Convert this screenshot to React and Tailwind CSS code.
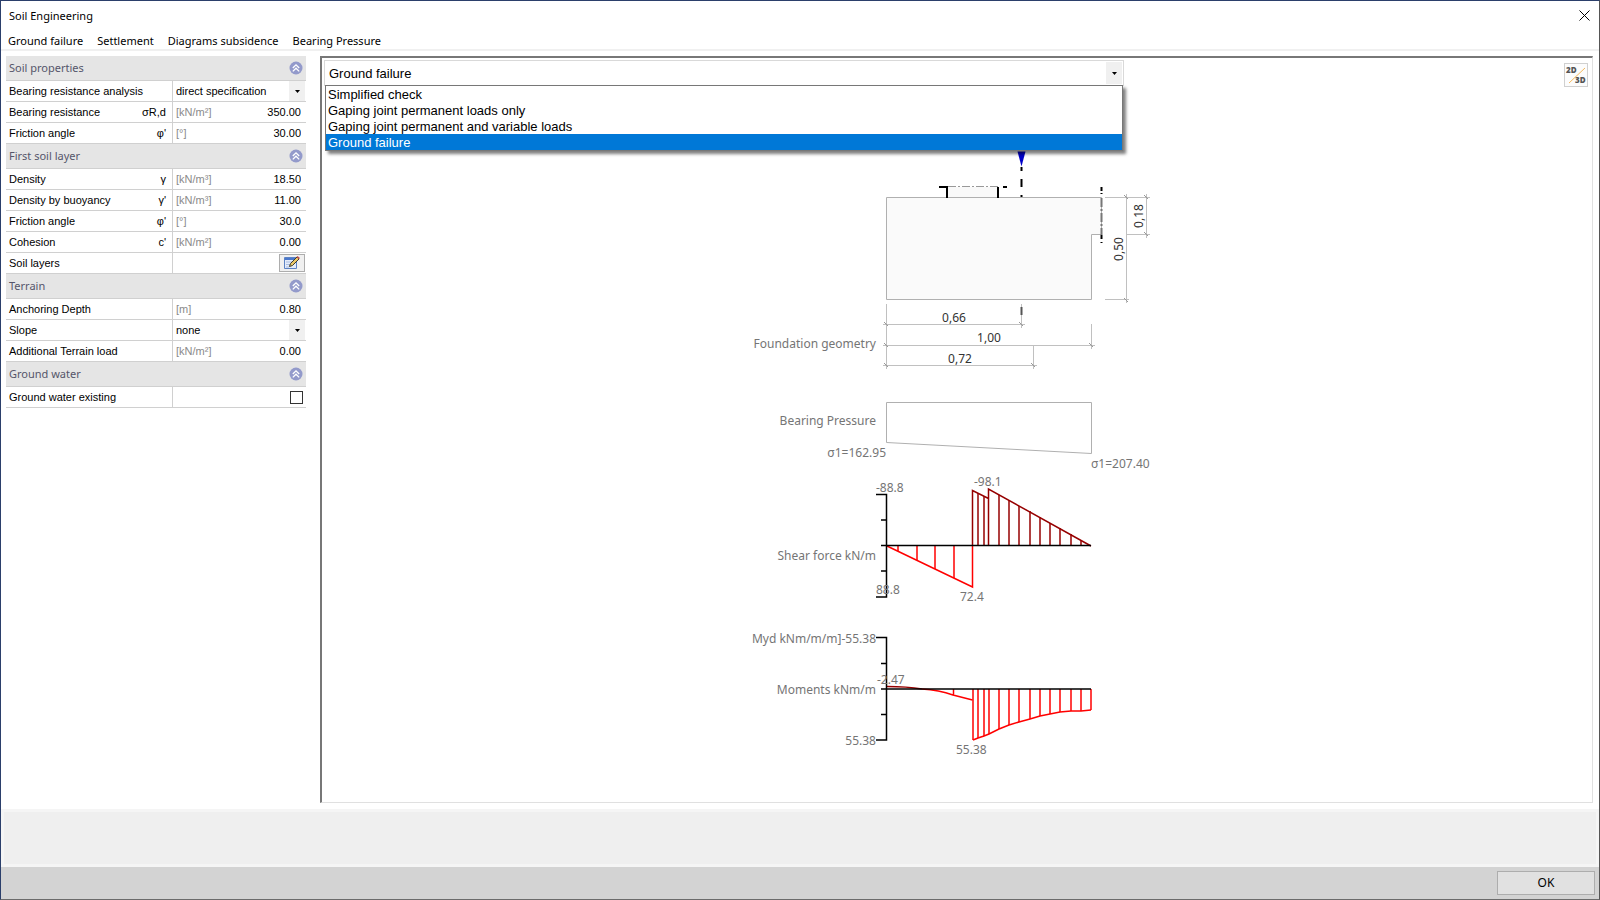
import { useState } from 'react'

const menuItems = ['Ground failure', 'Settlement', 'Diagrams subsidence', 'Bearing Pressure']

const checks = [
  'Simplified check',
  'Gaping joint permanent loads only',
  'Gaping joint permanent and variable loads',
  'Ground failure',
]

const sections = [
  {
    title: 'Soil properties',
    rows: [
      { id: 'analysis', label: 'Bearing resistance analysis', options: ['direct specification', 'calculated'] },
      { id: 'resistance', label: 'Bearing resistance', symbol: 'σR,d', unit: '[kN/m²]', value: '350.00' },
      { id: 'friction', label: 'Friction angle', symbol: "φ'", unit: '[°]', value: '30.00' },
    ],
  },
  {
    title: 'First soil layer',
    rows: [
      { id: 'density', label: 'Density', symbol: 'γ', unit: '[kN/m³]', value: '18.50' },
      { id: 'buoyancy', label: 'Density by buoyancy', symbol: "γ'", unit: '[kN/m³]', value: '11.00' },
      { id: 'layerFriction', label: 'Friction angle', symbol: "φ'", unit: '[°]', value: '30.0' },
      { id: 'cohesion', label: 'Cohesion', symbol: "c'", unit: '[kN/m²]', value: '0.00' },
      { id: 'layers', label: 'Soil layers', action: true },
    ],
  },
  {
    title: 'Terrain',
    rows: [
      { id: 'depth', label: 'Anchoring Depth', unit: '[m]', value: '0.80' },
      { id: 'slope', label: 'Slope', options: ['none', 'continuous'] },
      { id: 'terrainLoad', label: 'Additional Terrain load', unit: '[kN/m²]', value: '0.00' },
    ],
  },
  {
    title: 'Ground water',
    rows: [{ id: 'water', label: 'Ground water existing', checkbox: true }],
  },
]

// [x, y] of every ordinate in the result diagrams
const shearLeft = [[898, 551], [917, 560], [935, 569], [954, 578]]
const shearRight = [
  [978, 493], [984, 496], [999, 495], [1009, 500], [1019, 506], [1030, 511],
  [1040, 517], [1050, 523], [1060, 528], [1071, 534], [1081, 540],
]
const moments = [
  [973, 740], [978, 738], [984, 736], [989, 734], [999, 729], [1009, 725], [1019, 722],
  [1030, 719], [1040, 716], [1050, 714], [1060, 712], [1071, 711], [1081, 711], [1091, 710],
]

function ArrowDown() {
  return (
    <span className="pointer-events-none col-start-1 row-start-1 flex h-full w-4 items-center justify-center justify-self-end bg-[#f0f0f0]">
      <svg width="5" height="3" viewBox="0 0 5 3"><path d="M0 0h5L2.5 3z" /></svg>
    </span>
  )
}

function CollapseIcon() {
  return (
    <svg width="14" height="14" viewBox="0 0 14 14" fill="none">
      <circle cx="7" cy="7" r="6.5" fill="#939acb" />
      <path d="M3.8 7 7 3.8 10.2 7M3.8 10.4 7 7.2l3.2 3.2" stroke="#fff" strokeWidth="1.3" />
    </svg>
  )
}

function EditIcon() {
  return (
    <svg width="16" height="14" viewBox="0 0 16 14">
      <path d="M.5 1.500h12v11H.5z" fill="#e4ecfa" stroke="#5d83c4" />
      <path d="M1 2h11v2H1z" fill="#4a78cc" />
      <path d="M2 6h6M2 8.500h5M2 11h3" stroke="#a9bde2" />
      <path d="m5.500 10.500 1-3L13 1l2 2-6.500 6.500z" fill="#e9c766" stroke="#3c3a2c" />
      <path d="m12.500 1 1-1L16 2l-1.200 1.200z" fill="#c0504d" />
    </svg>
  )
}

function Row({ row }) {
  return (
    <div className="grid h-[21px] grid-cols-[167px_minmax(0,1fr)] border-b border-[#d0d0d0]">
      <label htmlFor={row.id} className="flex items-center justify-between border-r border-[#d0d0d0] pr-1.5 pl-[3px]">
        <span>{row.label}</span>
        <span>{row.symbol}</span>
      </label>
      {row.options && (
        <div className="grid pr-px">
          <select id={row.id} className="col-start-1 row-start-1 min-w-0 appearance-none pl-[3px] outline-none">
            {row.options.map(o => <option key={o}>{o}</option>)}
          </select>
          <ArrowDown />
        </div>
      )}
      {row.value && (
        <div className="flex items-center pr-[5px] pl-[3px]">
          <span className="text-[#8a8a8a]">{row.unit}</span>
          <input id={row.id} defaultValue={row.value} className="w-0 flex-1 text-right outline-none" />
        </div>
      )}
      {row.action && (
        <div className="flex items-center justify-end pr-px">
          <button id={row.id} aria-label="Edit soil layers" className="flex h-[18px] w-[26px] items-center justify-center border border-[#adadad] bg-[#f0f0f0]">
            <EditIcon />
          </button>
        </div>
      )}
      {row.checkbox && (
        <div className="flex items-center justify-end pr-[3px]">
          <input id={row.id} type="checkbox" className="size-[13px] appearance-none border border-[#333] bg-white checked:bg-[#333]" />
        </div>
      )}
    </div>
  )
}

function Section({ section }) {
  const [open, setOpen] = useState(true)
  return (
    <section>
      <h2 className="flex h-[25px] items-center justify-between border-b border-[#d0d0d0] bg-[#e5e5e5] pr-[3px] pl-[3px] font-['Noto_Sans',sans-serif] text-[#55556a]">
        {section.title}
        <button aria-label={`Toggle ${section.title}`} onClick={() => setOpen(!open)}>
          <CollapseIcon />
        </button>
      </h2>
      {open && section.rows.map(row => <Row key={row.id} row={row} />)}
    </section>
  )
}

// Dimension lines get a slanted tick at each end
function Tick({ x, y }) {
  return <path d={`M${x - 2} ${y - 2}l4 4`} stroke="#999" />
}

function Drawing() {
  return (
    <svg width="430" height="620" viewBox="741 150 430 620" fill="none" className="font-['Noto_Sans',sans-serif] text-xs">
      {/* Foundation */}
      <path d="M948 187h50v11h-50z" fill="#f9f9f9" />
      <path d="M886.5 197.500h215v37h-10v65h-205z" fill="#fafafa" stroke="#b0b0b0" />
      <path d="M948 186.500h50" stroke="#999" strokeDasharray="8 2 2 2" />
      <path d="M939 187h8v11M998 187v11M1003 187h4" stroke="#000" strokeWidth="2" />
      <path d="M1101.500 198v37" stroke="#777" strokeWidth="2" strokeDasharray="9 2 2 2" />
      <path d="M1101.500 187v4M1101.500 193v1M1101.500 235v4M1101.500 242v1" stroke="#000" strokeWidth="2" />
      <path d="M1017.500 151.500h8l-4 15z" fill="#0000c8" />
      <path d="M1021.500 167v4M1021.500 179v8M1021.500 195v2" stroke="#000" strokeWidth="2" />

      {/* Dimensions */}
      <path
        d="M1105 197.500h45M1126.500 194v109M1146.500 194v44M1126 234.500h24M1105 299.500h24M886.500 304v65M883 324.500h142M1021.500 304v24M883 345.500h212M1091.500 324v25M883 365.500h154M1033.500 345v24"
        stroke="#c0c0c0"
      />
      <path d="M1021.500 307v8" stroke="#555" strokeWidth="2" />
      {[[1126, 197], [1146, 197], [1146, 234], [1126, 300], [886, 324], [1021, 324], [886, 345], [1091, 345], [886, 365], [1033, 365]].map(
        ([x, y]) => <Tick key={`${x}-${y}`} x={x} y={y} />
      )}
      <g fill="#333" textAnchor="middle">
        <text x="954" y="322">0,66</text>
        <text x="989" y="342">1,00</text>
        <text x="960" y="363">0,72</text>
        <text transform="translate(1143 216) rotate(-90)">0,18</text>
        <text transform="translate(1123 249) rotate(-90)">0,50</text>
      </g>

      {/* Bearing pressure */}
      <path d="M886.500 402.500h205v51l-205-11z" stroke="#b0b0b0" />

      {/* Shear force */}
      <g stroke="#ff0000" strokeWidth="1.500">
        {shearLeft.map(([x, y]) => <path key={x} d={`M${x} 546V${y}`} />)}
        <path d="M887 546l85.500 41V546" />
      </g>
      <g stroke="#960000" strokeWidth="1.500">
        {shearRight.map(([x, y]) => <path key={x} d={`M${x} 546V${y}`} />)}
        <path d="M972.500 546v-55.500l16 8M988.500 546v-57l102.500 57" />
      </g>
      <path d="M876 494.500h10.500v102.500H876M881 520h5M881 571h5M881 545.500h210" stroke="#000" strokeWidth="1.500" />

      {/* Moments */}
      <path d="M887 686.500q20 0 35 2.500" stroke="#960000" strokeWidth="1.500" />
      <g stroke="#ff0000" strokeWidth="1.500">
        <path d="M922 689q17 1 31 6l19.500 5M953.500 689v6" />
        {moments.map(([x, y]) => <path key={x} d={`M${x} 689V${y}`} />)}
        <polyline points={moments.map(p => p.join(',')).join(' ')} />
      </g>
      <path d="M876 637.500h10.500V740H876M881 663.500h5M881 714.500h5M881 689h210" stroke="#000" strokeWidth="1.500" />

      {/* Labels */}
      <g fill="#757575">
        <g textAnchor="end">
          <text x="876" y="348">Foundation geometry</text>
          <text x="876" y="425">Bearing Pressure</text>
          <text x="886" y="457">σ1=162.95</text>
          <text x="876" y="560">Shear force kN/m</text>
          <text x="876" y="643">Myd kNm/m/m]-55.38</text>
          <text x="876" y="694">Moments kNm/m</text>
          <text x="876" y="745">55.38</text>
        </g>
        <text x="1091" y="468">σ1=207.40</text>
        <text x="876" y="492">-88.8</text>
        <text x="876" y="594">88.8</text>
        <text x="974" y="486">-98.1</text>
        <text x="960" y="601">72.4</text>
        <text x="877" y="684">-2.47</text>
        <text x="956" y="754">55.38</text>
      </g>
    </svg>
  )
}

function CheckSelect() {
  const [selected, setSelected] = useState('Ground failure')
  const [open, setOpen] = useState(true)
  return (
    <div className="relative w-[800px] max-w-full text-[13px]">
      <button
        aria-haspopup="listbox"
        aria-expanded={open}
        onClick={() => setOpen(!open)}
        className="grid h-[26px] w-full items-center border border-[#d9d9d9] bg-white p-px text-left"
      >
        <span className="col-start-1 row-start-1 pt-0.5 pl-[3px]">{selected}</span>
        <ArrowDown />
      </button>
      {open && (
        <ul role="listbox" className="absolute inset-x-px top-[25px] border border-[#777] bg-white shadow-[3px_3px_3px_rgba(0,0,0,0.5)]">
          {checks.map(check => (
            <li
              key={check}
              role="option"
              aria-selected={check === selected}
              onClick={() => { setSelected(check); setOpen(false) }}
              className="h-4 pl-0.5 leading-[18px] aria-selected:bg-[#0078d7] aria-selected:text-white"
            >
              {check}
            </li>
          ))}
        </ul>
      )}
    </div>
  )
}

function App() {
  return (
    <div className="flex min-h-screen flex-col border border-[#2b3f6b] border-r-[#555] border-b-[#6b6b6b] bg-white font-['Liberation_Sans',Arial,sans-serif] text-[11px] leading-4 text-black">
      {/* Title bar */}
      <header className="font-['Noto_Sans',sans-serif]">
        <div className="flex h-[29px] items-center justify-between pr-[9px] pl-2">
          <h1>Soil Engineering</h1>
          <button aria-label="Close">
            <svg width="11" height="11" viewBox="0 0 11 11" stroke="#000"><path d="M.5.5l10 10M10.500.5l-10 10" /></svg>
          </button>
        </div>
        <nav className="flex h-[21px] items-end gap-3.5 border-b-2 border-[#f0f0f0] pl-[7px]">
          {menuItems.map(item => <a key={item} href="#">{item}</a>)}
        </nav>
      </header>

      <div className="flex flex-1 gap-3.5 pt-[5px] pr-1.5 pb-1.5 pl-[5px]">
        <aside className="w-[300px] shrink-0">
          {sections.map(section => <Section key={section.title} section={section} />)}
        </aside>

        <main className="flex flex-1 flex-col border-t-2 border-r border-b border-l-2 border-t-[#777] border-r-[#e0e0e0] border-b-[#e0e0e0] border-l-[#777] pt-0.5 pr-1 pl-0.5">
          <div className="flex items-start justify-between">
            <CheckSelect />
            <button aria-label="2D/3D" className="mt-[3px] grid size-6 border border-[#d0d0d0] bg-[#fcfcfc]">
              <svg width="22" height="22" viewBox="0 0 22 22" className="font-['Open_Sans',sans-serif] text-[8px] font-extrabold">
                <path d="M4 19 20 4" stroke="#f7b95a" />
                <text x="1" y="9" fill="#555">2D</text>
                <text x="10" y="19" fill="#555">3D</text>
              </svg>
            </button>
          </div>
          <div className="mt-[63px] flex justify-center">
            <Drawing />
          </div>
        </main>
      </div>

      <div className="h-[58px] border-3 border-[#f5f5f5] bg-[#efefef]" />
      <footer className="flex h-8 items-center justify-end bg-[#d3d3d3] pr-1">
        <button className="h-6 w-[98px] border border-[#adadad] bg-[#e1e1e1] font-['Noto_Sans',sans-serif] text-xs">OK</button>
      </footer>
    </div>
  )
}

export default App
